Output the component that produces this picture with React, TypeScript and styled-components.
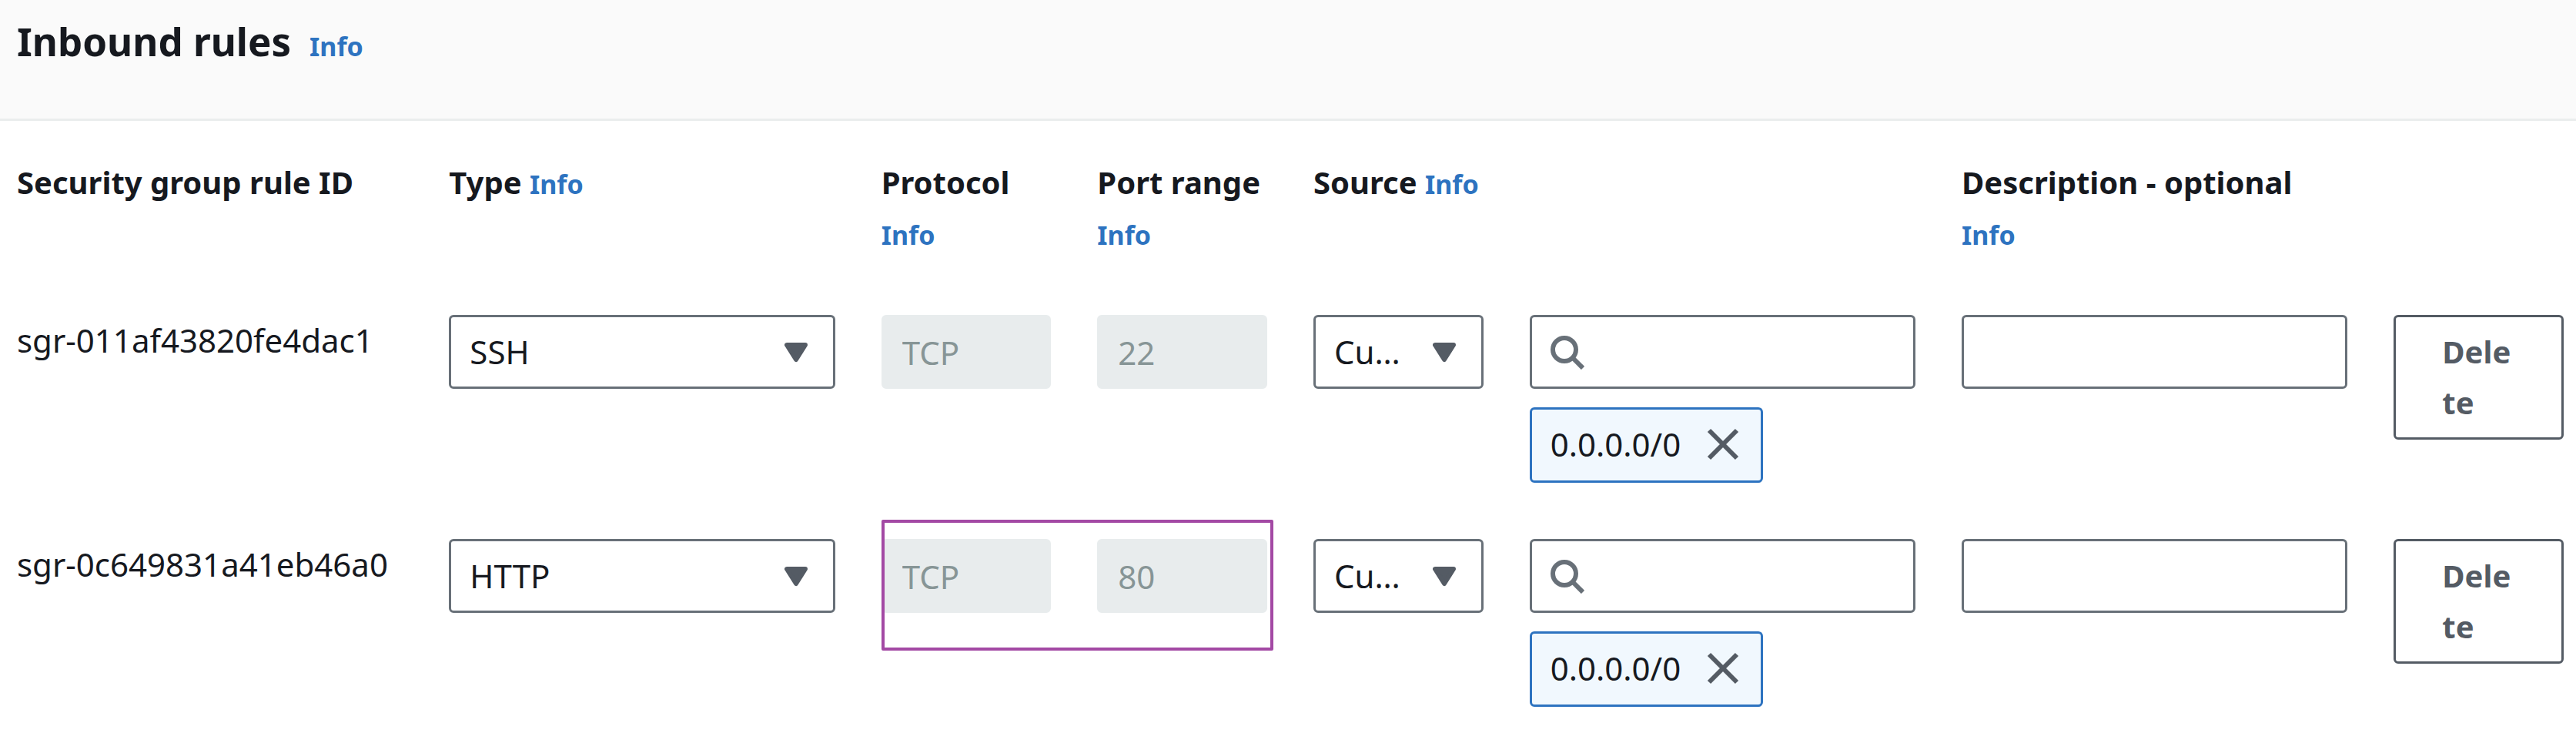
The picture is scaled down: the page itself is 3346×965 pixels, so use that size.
import React from "react";
import styled, { createGlobalStyle } from "styled-components";

const color = {
  text: "#16191f",
  muted: "#545b64",
  border: "#687078",
  link: "#2d73c0",
  disabledBg: "#e8eced",
  disabledText: "#879596",
  tagBg: "#f1f8fe",
  marker: "#a349a4",
};

const GlobalStyle = createGlobalStyle`
  *, *::before, *::after { box-sizing: border-box; }
  body {
    margin: 0;
    background: #fff;
    color: ${color.text};
    font: 400 42px/66px "Noto Sans", "Open Sans", sans-serif;
  }
  button, input, select { font: inherit; color: inherit; margin: 0; }
`;

const Header = styled.header`
  display: flex;
  align-items: baseline;
  gap: 24px;
  padding: 20px 22px 68px;
  background: #fafafa;
  border-bottom: 3px solid #eaeded;
`;

const Title = styled.h2`
  margin: 0;
  font-size: 51px;
  font-weight: 700;
  line-height: 66px;
`;

const InfoLink = styled.a`
  color: ${color.link};
  font-size: 34px;
  font-weight: 700;
  line-height: 40px;
  text-decoration: none;
`;

const RulesTable = styled.table`
  display: block;
  padding: 47px 16px 73px 22px;
`;

const TableHead = styled.thead`
  display: block;
  margin-bottom: 73px;
`;

const TableBody = styled.tbody`
  display: grid;
  gap: 73px;
`;

const Row = styled.tr`
  display: grid;
  grid-template-columns: repeat(12, minmax(0, 1fr));
  column-gap: 60px;
  align-items: start;
`;

const HeadCell = styled.th<{ $span?: number }>`
  grid-column: span ${(p) => p.$span ?? 1};
  padding: 0;
  text-align: left;
  font-size: 40px;
  font-weight: 700;
`;

const Cell = styled.td<{ $span?: number }>`
  position: relative;
  display: flex;
  flex-direction: column;
  align-items: flex-start;
  gap: 24px;
  grid-column: span ${(p) => p.$span ?? 1};
  padding: 0;
`;

const TextInput = styled.input`
  display: block;
  width: 100%;
  height: 96px;
  padding: 12px 24px;
  border: 3px solid ${color.border};
  border-radius: 6px;
  background: #fff;

  &:disabled {
    border-color: ${color.disabledBg};
    background: ${color.disabledBg};
    color: ${color.disabledText};
  }
`;

const Field = styled.div`
  position: relative;
  width: 100%;
`;

const SearchInput = styled(TextInput)`
  padding-left: 84px;
`;

const SearchGlyph = styled.svg`
  position: absolute;
  left: 27px;
  top: 27px;
  width: 44px;
  height: 44px;
  pointer-events: none;
`;

const SelectInput = styled.select`
  appearance: none;
  display: block;
  width: 100%;
  height: 96px;
  padding: 12px 90px 12px 24px;
  border: 3px solid ${color.border};
  border-radius: 6px;
  background: #fff;
  overflow: hidden;
  text-overflow: ellipsis;
  white-space: nowrap;
`;

const Caret = styled.svg`
  position: absolute;
  right: 36px;
  top: 36px;
  width: 30px;
  height: 26px;
  pointer-events: none;
`;

const Tag = styled.span`
  display: flex;
  align-items: center;
  gap: 34px;
  height: 98px;
  padding: 0 28px 2px 24px;
  border: 3px solid ${color.link};
  border-radius: 6px;
  background: ${color.tagBg};
`;

const DismissButton = styled.button`
  display: flex;
  padding: 0;
  border: 0;
  background: none;
`;

const DeleteButton = styled.button`
  width: 100%;
  padding: 12px 60px;
  border: 3px solid ${color.muted};
  border-radius: 6px;
  background: #fff;
  color: ${color.muted};
  font-size: 40px;
  font-weight: 700;
  text-align: left;
  word-break: break-all;
`;

/* Outlines the protocol and port cells of one rule. */
const Marker = styled.span`
  position: absolute;
  top: -25px;
  left: 0;
  width: calc(200% + 68px);
  height: 170px;
  border: 4px solid ${color.marker};
  border-radius: 2px;
  pointer-events: none;
`;

function Select({ value, options, labelledBy }: { value: string; options: string[]; labelledBy: string }) {
  return (
    <Field>
      <SelectInput defaultValue={value} aria-labelledby={labelledBy}>
        {options.map((o) => (
          <option key={o}>{o}</option>
        ))}
      </SelectInput>
      <Caret viewBox="0 0 30 26" aria-hidden="true">
        <path d="M3 3H27L15 22Z" fill={color.muted} stroke={color.muted} strokeWidth="6" strokeLinejoin="round" />
      </Caret>
    </Field>
  );
}

function Search({ labelledBy }: { labelledBy: string }) {
  return (
    <Field>
      <SearchInput type="text" aria-labelledby={labelledBy} />
      <SearchGlyph viewBox="0 0 44 44" fill="none" stroke={color.border} strokeWidth="6" aria-hidden="true">
        <circle cx="18" cy="18" r="15" />
        <path d="M28 28L42 42" />
      </SearchGlyph>
    </Field>
  );
}

const Info = () => <InfoLink href="#info">Info</InfoLink>;

const rules = [
  { id: "sgr-011af43820fe4dac1", type: "SSH", protocol: "TCP", port: "22", cidr: "0.0.0.0/0", marked: false },
  { id: "sgr-0c649831a41eb46a0", type: "HTTP", protocol: "TCP", port: "80", cidr: "0.0.0.0/0", marked: true },
];

export default function App() {
  return (
    <>
      <GlobalStyle />
      <main>
        <Header>
          <Title>Inbound rules</Title>
          <Info />
        </Header>
        <RulesTable>
          <TableHead>
            <Row>
              <HeadCell $span={2}>Security group rule ID</HeadCell>
              <HeadCell $span={2} id="type">Type <Info /></HeadCell>
              <HeadCell id="protocol">Protocol <Info /></HeadCell>
              <HeadCell id="port">Port range <Info /></HeadCell>
              <HeadCell $span={3} colSpan={2} id="source">Source <Info /></HeadCell>
              <HeadCell $span={2} id="description">Description - optional <Info /></HeadCell>
            </Row>
          </TableHead>
          <TableBody>
            {rules.map((rule) => (
              <Row key={rule.id}>
                <Cell $span={2}>{rule.id}</Cell>
                <Cell $span={2}>
                  <Select value={rule.type} options={["SSH", "HTTP"]} labelledBy="type" />
                </Cell>
                <Cell>
                  <TextInput type="text" disabled defaultValue={rule.protocol} aria-labelledby="protocol" />
                  {rule.marked && <Marker />}
                </Cell>
                <Cell>
                  <TextInput type="text" disabled defaultValue={rule.port} aria-labelledby="port" />
                </Cell>
                <Cell>
                  <Select value="Custom" options={["Custom"]} labelledBy="source" />
                </Cell>
                <Cell $span={2}>
                  <Search labelledBy="source" />
                  <Tag>
                    {rule.cidr}
                    <DismissButton type="button" aria-label={`Remove ${rule.cidr}`}>
                      <svg width="42" height="42" viewBox="0 0 42 42" stroke={color.muted} strokeWidth="6" aria-hidden="true">
                        <path d="M3 3L39 39M39 3L3 39" />
                      </svg>
                    </DismissButton>
                  </Tag>
                </Cell>
                <Cell $span={2}>
                  <TextInput type="text" aria-labelledby="description" />
                </Cell>
                <Cell>
                  <DeleteButton type="button">Delete</DeleteButton>
                </Cell>
              </Row>
            ))}
          </TableBody>
        </RulesTable>
      </main>
    </>
  );
}
